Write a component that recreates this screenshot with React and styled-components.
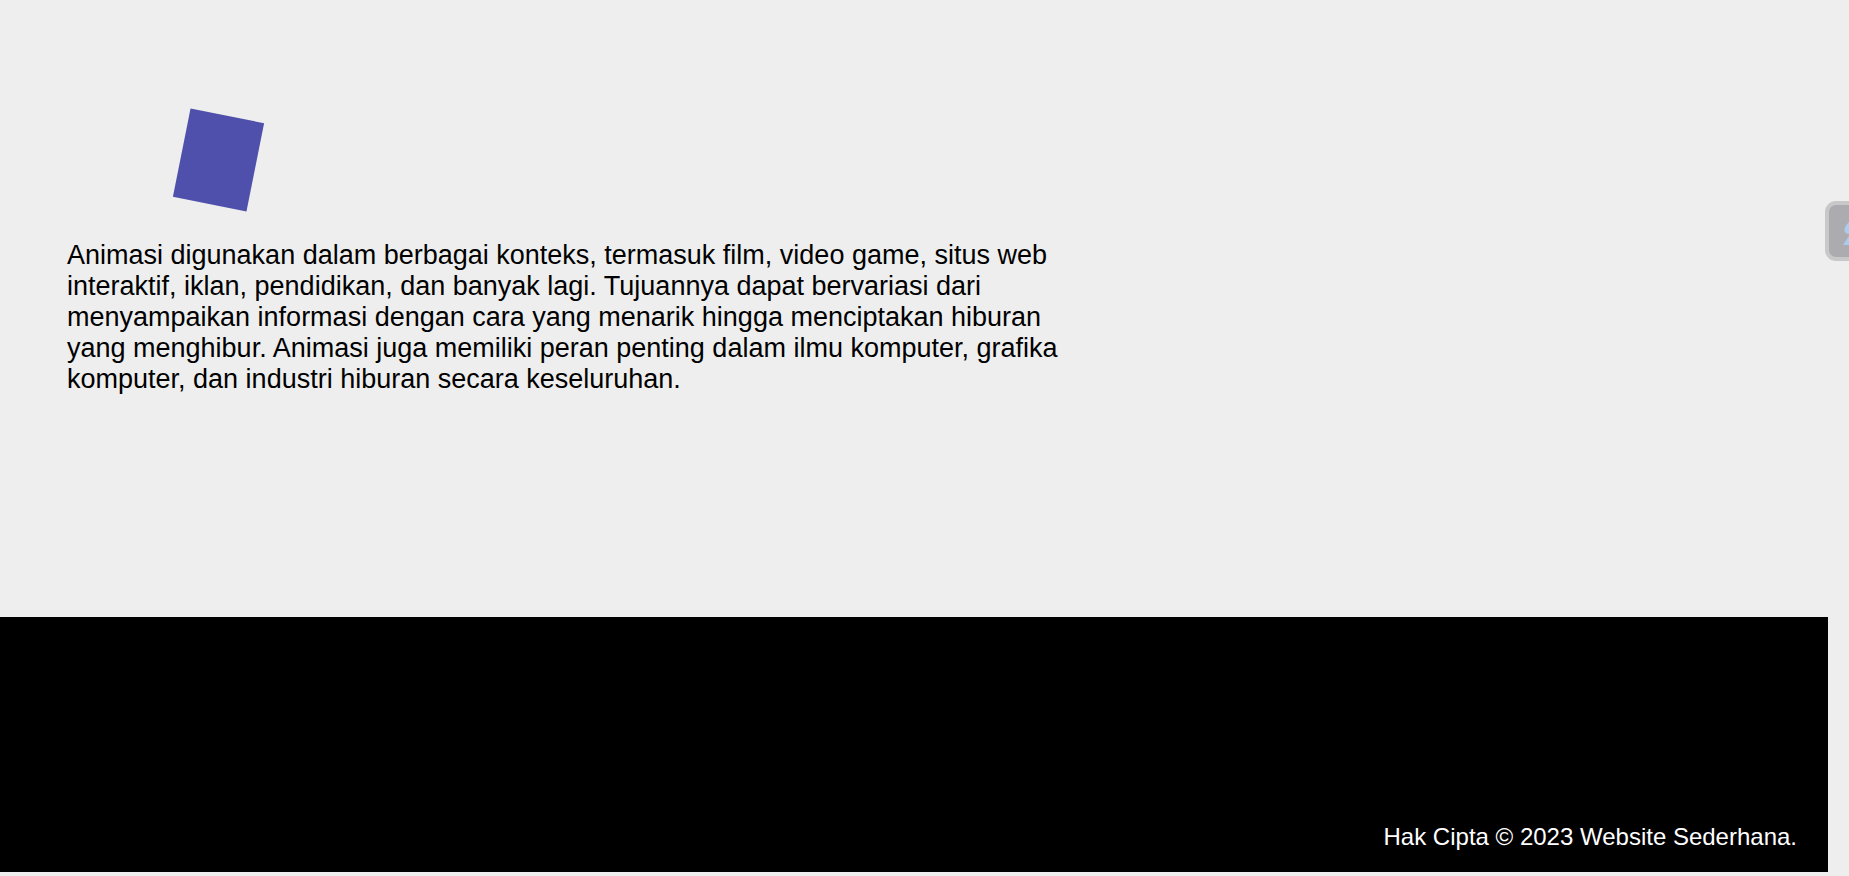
import React from "react";
import styled, { createGlobalStyle } from "styled-components";

const GlobalStyle = createGlobalStyle`
  html, body {
    margin: 0;
    padding: 0;
    background: #eeeeee;
    font-family: "Liberation Sans", Arial, sans-serif;
    overflow: hidden;
  }
`;

const Page = styled.div`
  width: 1849px;
  height: 876px;
  display: flex;
  flex-direction: column;
`;

const Main = styled.main`
  height: 617px;
  box-sizing: border-box;
  padding: 115px 0 0 67px;
  display: flex;
  flex-direction: column;
  align-items: flex-start;
`;

const Box = styled.div`
  width: 75px;
  height: 90px;
  margin-left: 114px;
  background: #4e50ab;
  transform: rotate(11.3deg);
`;

const Text = styled.p`
  margin: 35px 0 0;
  width: 1010px;
  font-size: 27px;
  line-height: normal;
  color: #000;
`;

const Footer = styled.footer`
  width: 1828px;
  height: 255px;
  box-sizing: border-box;
  background: #000;
  color: #fff;
  display: flex;
  flex-direction: column;
  justify-content: flex-end;
  align-items: flex-end;
  padding: 0 31px 21px 0;
  font-size: 24px;
`;

const SideTab = styled.div`
  position: fixed;
  top: 201px;
  left: 1825px;
  width: 40px;
  height: 52px;
  border: 4px solid #c8c8c8;
  border-radius: 11px;
  background: #acacb0;
  overflow: hidden;
`;

const TabIcon = styled.svg`
  position: absolute;
  left: 14px;
  top: 15px;
`;

export default function App() {
  return (
    <>
      <GlobalStyle />
      <Page>
        <Main>
          <Box />
          <Text>
            Animasi digunakan dalam berbagai konteks, termasuk film, video game, situs web
            interaktif, iklan, pendidikan, dan banyak lagi. Tujuannya dapat bervariasi dari
            menyampaikan informasi dengan cara yang menarik hingga menciptakan hiburan
            yang menghibur. Animasi juga memiliki peran penting dalam ilmu komputer, grafika
            komputer, dan industri hiburan secara keseluruhan.
          </Text>
        </Main>
        <Footer>Hak Cipta © 2023 Website Sederhana.</Footer>
      </Page>
      <SideTab>
        <TabIcon width="20" height="26" viewBox="0 0 20 26">
          <path d="M8 0 C4 4 0 8 2 12 C4 15 12 15 14 12 C16 8 12 4 8 0 Z" fill="#a9cdf0" />
          <path d="M8 13 L0 25 L20 25 Z" fill="#a9cdf0" />
        </TabIcon>
      </SideTab>
    </>
  );
}
